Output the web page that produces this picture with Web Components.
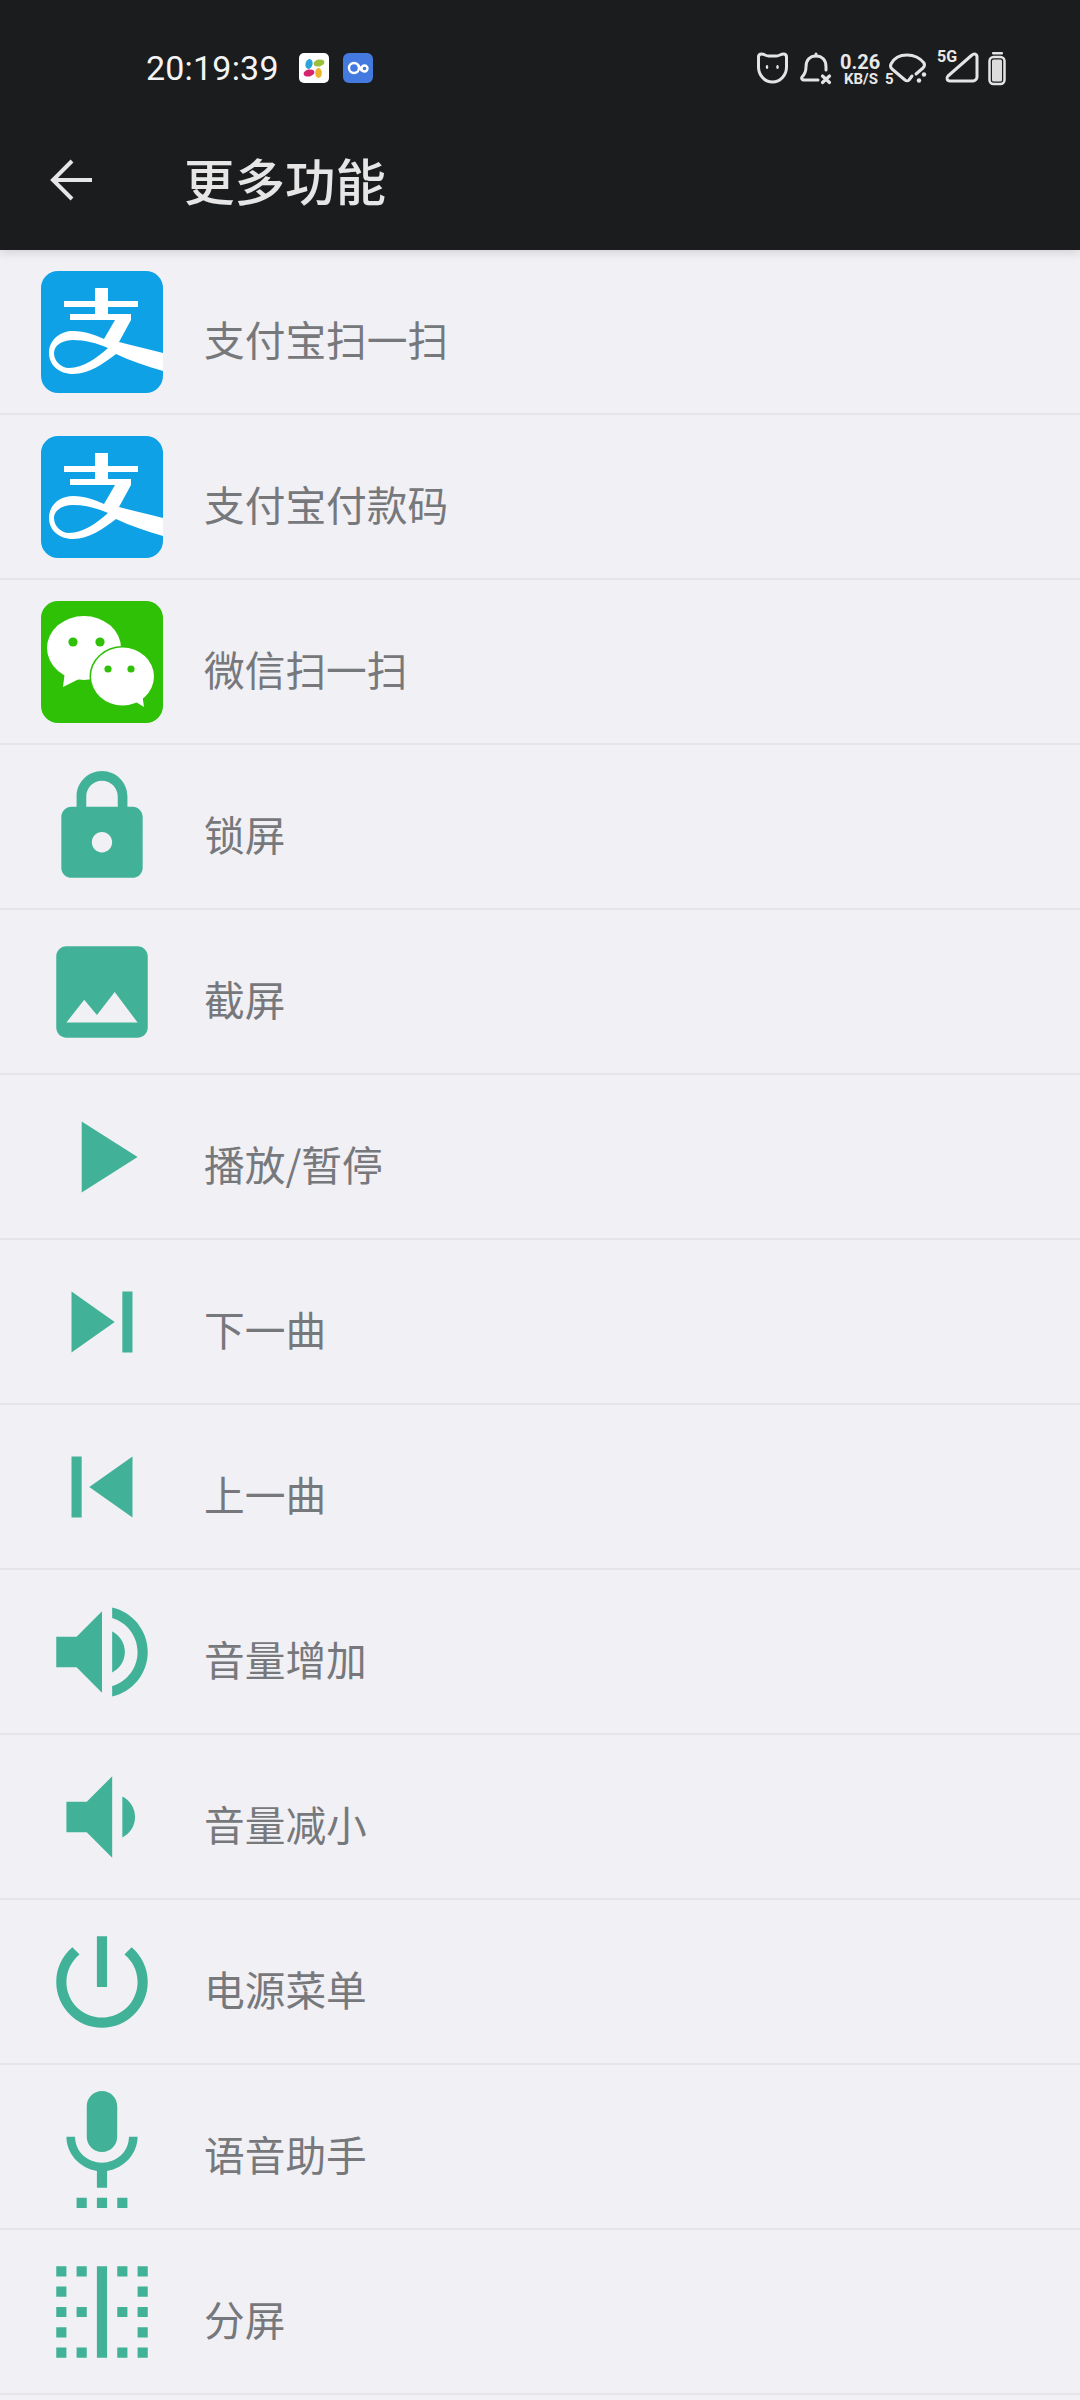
<!DOCTYPE html>
<html>
<head>
<meta charset="utf-8">
<style>
html, body { margin: 0; padding: 0; background: #f0f0f5; }
body { width: 1080px; height: 2400px; overflow: hidden; font-family: Roboto, "Noto Sans CJK SC", sans-serif; }
</style>
</head>
<body>
<app-page></app-page>

<template id="status-tpl">
  <style>
    :host { display: flex; align-items: center; height: 136px; padding: 0 40px 0 146px; color: #f4f4f4; box-sizing: border-box; }
    .time { font: 400 34px Roboto, sans-serif; letter-spacing: 0.2px; margin-right: 20px; }
    .app { display: block; margin-right: 14px; }
    .right { margin-left: auto; display: flex; align-items: center; margin-bottom: 6px; }
    svg { display: block; }
    text { font-family: Roboto, sans-serif; font-weight: 700; fill: #e8e8e8; }
  </style>
  <span class="time">20:19:39</span>
  <svg class="app" width="30" height="30" viewBox="0 0 30 30">
    <rect width="30" height="30" rx="5" fill="#fff"/>
    <ellipse cx="10" cy="11" rx="3.500" ry="5" fill="#2aa5d8" transform="rotate(15 10 11)"/>
    <ellipse cx="20" cy="10" rx="5.500" ry="3.500" fill="#9cc03c" transform="rotate(-12 20 10)"/>
    <ellipse cx="10" cy="20" rx="5.500" ry="3.500" fill="#d6246e" transform="rotate(-12 10 20)"/>
    <ellipse cx="19.500" cy="20" rx="3.300" ry="5" fill="#edb32f"/>
  </svg>
  <svg class="app" width="30" height="30" viewBox="0 0 30 30">
    <rect width="30" height="30" rx="6" fill="#4479e0"/>
    <g fill="none" stroke="#fff" stroke-width="2.400">
      <circle cx="11" cy="15" r="5"/>
      <circle cx="21.500" cy="15.500" r="3"/>
      <path d="M15 12l4 6"/>
    </g>
  </svg>
  <div class="right">
    <svg width="320" height="70" viewBox="0 0 320 70">
      <g fill="none" stroke="#e4e4e4" stroke-width="3" stroke-linejoin="round" stroke-linecap="round">
        <!-- face -->
        <path d="M41.500 24c3 0 4 2 7 2h8c3 0 4-2 7-2 2 0 3 1 3 3v10c0 8-6 15-14 15s-14-7-14-15V27c0-2 1-3 3-3z"/>
        <!-- bell -->
        <path d="M98 50H84c-2 0-3-2-2-3 3-3 4-5 4-10 0-7 4-11 10-11s10 4 10 11v3M96 24v2"/>
        <path d="M102.500 46l7 6.500M109.500 46l-7 6.500" stroke-width="3.200"/>
        <!-- wifi -->
        <path d="M192 46l-3 4c-1 1-3 1-4 0L172 39c-2-2-2-3-1-5 3-6 9-9 16-9s13 3 17 8c1 2 1 3-1 5l-7 6"/>
        <!-- signal -->
        <path d="M230 51c-3 0-4-3-2-5l24-21c2-2 5-1 5 2v20c0 2-2 4-4 4z"/>
      </g>
      <ellipse cx="47" cy="37" rx="1.300" ry="2" fill="#e4e4e4"/>
      <ellipse cx="57.500" cy="37" rx="1.300" ry="2" fill="#e4e4e4"/>
      <circle cx="199" cy="50.500" r="2.200" fill="#e4e4e4"/>
      <circle cx="204" cy="44.500" r="2.200" fill="#e4e4e4"/>
      <text x="120" y="39" font-size="20">0.26</text>
      <text x="124" y="54" font-size="15">KB/S</text>
      <text x="165" y="54" font-size="15">5</text>
      <text x="217" y="32" font-size="16">5G</text>
      <rect x="272" y="22" width="11" height="2.400" rx="1" fill="#e4e4e4"/>
      <rect x="269.500" y="27" width="15" height="27" rx="4" fill="none" stroke="#e4e4e4" stroke-width="2.500"/>
      <rect x="272" y="29.500" width="10" height="22" rx="1.500" fill="#dcdcdc"/>
    </svg>
  </div>
</template>

<template id="title-tpl">
  <style>
    :host { display: flex; align-items: center; height: 114px; padding-bottom: 28px; box-sizing: border-box; padding-left: 50px; }
    svg { display: block; width: 44px; height: 44px; margin-right: 90px; margin-top: 2px; }
    .title { font: 500 50.500px "Noto Sans CJK SC", sans-serif; color: #e6e6e6; line-height: 60px; }
  </style>
  <svg viewBox="0 0 44 44"><path d="M22 3L3 22l19 19M3 22h39" fill="none" stroke="#e6e6e6" stroke-width="4"/></svg>
  <span class="title"><slot></slot></span>
</template>

<template id="row-tpl">
  <style>
    :host { display: flex; align-items: center; height: 165px; box-sizing: border-box; padding-left: 41px; border-bottom: 2px solid #e4e5e9; }
    .icon { width: 122px; height: 122px; margin-right: 41px; flex: none; }
    ::slotted(svg) { display: block; width: 122px; height: 122px; }
    .label { font: 400 40.700px "Noto Sans CJK SC", sans-serif; color: #77787c; line-height: 48px; padding-top: 14px; }
  </style>
  <div class="icon"><slot name="icon"></slot></div>
  <span class="label"><slot></slot></span>
</template>

<template id="page-tpl">
  <style>
    :host { display: block; }
    header { background: #1b1c1e; height: 250px; box-shadow: 0 2px 10px rgba(0,0,0,.14); position: relative; }
  </style>
  <header>
    <status-bar></status-bar>
    <title-bar>更多功能</title-bar>
  </header>
  <slot></slot>
</template>

<script>
// split icon is a dot grid around the middle bar
function splitPath() {
  let d = 'M11 3h2v18h-2z';
  [3, 7, 11, 15, 19].forEach((y, i) => {
    const cols = i % 2 ? [3, 19] : [3, 7, 15, 19];
    cols.forEach(x => { d += `M${x} ${y}h2v2h-2z`; });
  });
  return d;
}

// material paths, 24 unit box drawn at 122px
const PATHS = {
  lock: 'M18 8h-1V6c0-2.76-2.24-5-5-5S7 3.24 7 6v2H6c-1.1 0-2 .9-2 2v10c0 1.1.9 2 2 2h12c1.1 0 2-.9 2-2V10c0-1.1-.9-2-2-2zm-6 9c-1.1 0-2-.9-2-2s.9-2 2-2 2 .9 2 2-.9 2-2 2zm3.1-9H8.9V6c0-1.71 1.39-3.1 3.1-3.1 1.71 0 3.1 1.39 3.1 3.1v2z',
  image: 'M21 19V5c0-1.1-.9-2-2-2H5c-1.1 0-2 .9-2 2v14c0 1.1.9 2 2 2h14c1.1 0 2-.9 2-2zM8.5 13.5l2.5 3.01L14.500 12l4.500 6H5l3.500-4.500z',
  play: 'M8 5v14l11-7z',
  next: 'M6 18l8.500-6L6 6v12zM16 6v12h2V6h-2z',
  prev: 'M6 6h2v12H6zm3.500 6l8.500 6V6z',
  volup: 'M3 9v6h4l5 5V4L7 9H3zm13.500 3c0-1.770-1.020-3.290-2.500-4.030v8.050c1.480-.730 2.500-2.250 2.500-4.020zM14 3.230v2.060c2.890.860 5 3.540 5 6.710s-2.110 5.850-5 6.710v2.060c4.010-.910 7-4.490 7-8.770s-2.990-7.860-7-8.770z',
  voldown: 'M18.500 12c0-1.770-1.020-3.290-2.500-4.030v8.050c1.480-.730 2.500-2.250 2.500-4.020zM5 9v6h4l5 5V4L9 9H5z',
  power: 'M13 3h-2v10h2V3zm4.830 2.170l-1.420 1.420C17.990 7.860 19 9.810 19 12c0 3.870-3.130 7-7 7s-7-3.130-7-7c0-2.190 1.010-4.140 2.580-5.420L6.170 5.170C4.230 6.820 3 9.260 3 12c0 4.970 4.030 9 9 9s9-4.030 9-9c0-2.740-1.230-5.180-3.170-6.830z',
  voice: 'M7 24h2v-2H7v2zm5-11c1.660 0 2.990-1.340 2.990-3L15 4c0-1.660-1.340-3-3-3S9 2.340 9 4v6c0 1.660 1.340 3 3 3zm-1 11h2v-2h-2v2zm4 0h2v-2h-2v2zm4-14h-1.700c0 3-2.540 5.100-5.300 5.100S6.700 13 6.700 10H5c0 3.410 2.720 6.230 6 6.720V20h2v-3.280c3.280-.490 6-3.310 6-6.720z',
  split: splitPath()
};

const ALIPAY = `<svg slot="icon" viewBox="0 0 122 122">
  <rect width="122" height="122" rx="17" fill="#0ea1e6"/>
  <g fill="#fff">
    <rect x="54" y="17" width="13" height="32"/>
    <rect x="23" y="30" width="74" height="6"/>
    <rect x="29" y="43" width="61" height="6"/>
    <path fill-rule="evenodd" d="M74 49H90L78 71C92 75 108 78 122 82V100C105 95 90 90 75 83 62 93 48 103 32 103 18 103 8 94 8 82 8 68 20 60 32 60 44 60 54 64 63 68ZM13 82C13 90 20 97 28 97 42 97 56 87 67 77 56 72 44 69 32 69 22 69 13 74 13 82Z"/>
  </g>
</svg>`;

const WECHAT = `<svg slot="icon" viewBox="0 0 122 122">
  <rect width="122" height="122" rx="17" fill="#2fc106"/>
  <ellipse cx="43" cy="47" rx="37" ry="32" fill="#fff"/>
  <path d="M24 70L22 86 42 76z" fill="#fff"/>
  <ellipse cx="81.500" cy="75.500" rx="31.500" ry="29" fill="#fff" stroke="#2fc106" stroke-width="3" paint-order="stroke"/>
  <path d="M90 98L103 106 101 92z" fill="#fff"/>
  <circle cx="32" cy="41" r="4.600" fill="#2fc106"/><circle cx="59" cy="41" r="4.600" fill="#2fc106"/>
  <circle cx="67" cy="68" r="3.600" fill="#2fc106"/><circle cx="90" cy="68" r="3.600" fill="#2fc106"/>
</svg>`;

const ROWS = [
  ['支付宝扫一扫', ALIPAY], ['支付宝付款码', ALIPAY], ['微信扫一扫', WECHAT],
  ['锁屏', 'lock'], ['截屏', 'image'], ['播放/暂停', 'play'], ['下一曲', 'next'], ['上一曲', 'prev'],
  ['音量增加', 'volup'], ['音量减小', 'voldown'], ['电源菜单', 'power'], ['语音助手', 'voice'], ['分屏', 'split']
];

class TplElement extends HTMLElement {
  constructor(id) {
    super();
    this.attachShadow({mode: 'open'});
    this.shadowRoot.appendChild(document.getElementById(id).content.cloneNode(true));
  }
}
class StatusBar extends TplElement { constructor() { super('status-tpl'); } }
class TitleBar extends TplElement { constructor() { super('title-tpl'); } }
class MenuRow extends TplElement { constructor() { super('row-tpl'); } }
class AppPage extends TplElement {
  constructor() { super('page-tpl'); }
  connectedCallback() {
    this.innerHTML = ROWS.map(([label, icon]) => {
      const svg = PATHS[icon]
        ? `<svg slot="icon" viewBox="0 0 24 24" fill="#41b298"><path d="${PATHS[icon]}"/></svg>`
        : icon;
      return `<menu-row>${svg}${label}</menu-row>`;
    }).join('');
  }
}
customElements.define('status-bar', StatusBar);
customElements.define('title-bar', TitleBar);
customElements.define('menu-row', MenuRow);
customElements.define('app-page', AppPage);
</script>
</body>
</html>
